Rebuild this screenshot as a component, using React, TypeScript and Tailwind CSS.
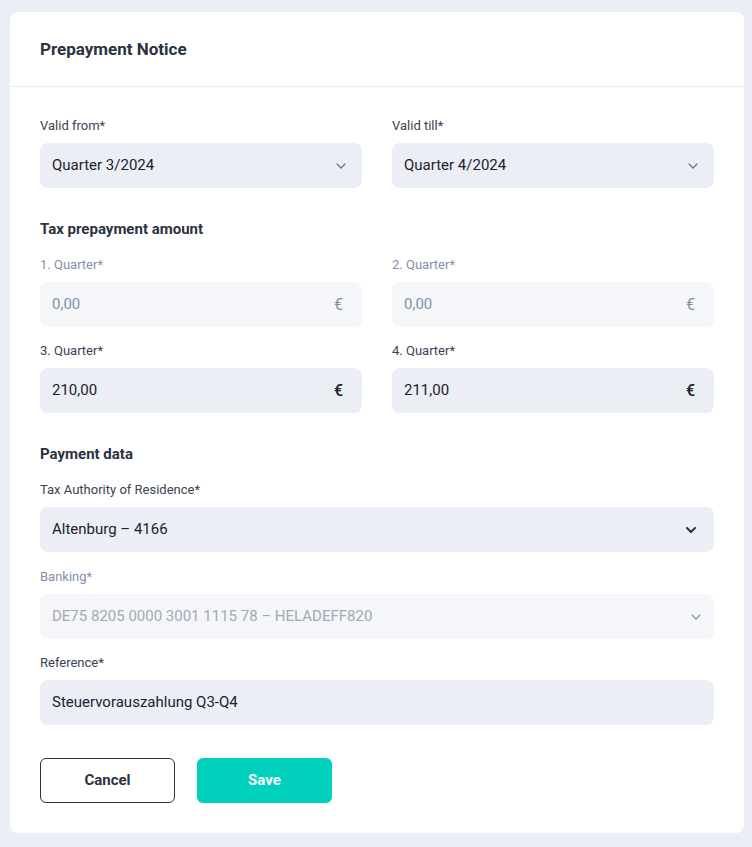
const font = { fontFamily: 'Roboto, "Noto Sans", sans-serif' };

function Chevron({ className }: { className: string }) {
  return (
    <svg width="10" height="6" viewBox="0 0 10 6" fill="none" className={className}>
      <path d="M1 1l4 4 4-4" stroke="currentColor" strokeLinecap="round" strokeLinejoin="round" />
    </svg>
  );
}

function Label({ text, muted }: { text: string; muted?: boolean }) {
  return (
    <div className={`text-[13px] leading-[18px] mb-2 ${muted ? 'text-[#8291a8]' : 'text-[#3a4252]'}`}>{text}</div>
  );
}

function SelectField({ label, value }: { label: string; value: string }) {
  return (
    <div>
      <Label text={label} />
      <div className="h-[45px] rounded-lg bg-[#ebeef5] flex items-center justify-between pl-3 pr-4">
        <span className="text-[15px] text-[#1c2230]">{value}</span>
        <Chevron className="text-[#6b7280] stroke-[1.2]" />
      </div>
    </div>
  );
}

function AmountField({ label, value, disabled }: { label: string; value: string; disabled?: boolean }) {
  return (
    <div>
      <Label text={label} muted={disabled} />
      <div
        className={`h-[45px] rounded-lg flex items-center justify-between pl-3 pr-[19px] ${
          disabled ? 'bg-[#f4f6fa] text-[#8191a8]' : 'bg-[#ebeef5] text-[#1c2230]'
        }`}
      >
        <span className="text-[15px]">{value}</span>
        <span className={`text-base ${disabled ? '' : 'font-medium'}`}>€</span>
      </div>
    </div>
  );
}

export default function App() {
  return (
    <div className="min-h-screen bg-[#ebeef5] pt-3 pb-[14px] pl-[10px] pr-2" style={font}>
      <div className="bg-white rounded-lg">
        <div className="h-[75px] flex items-center px-[30px] pt-[2px] border-b border-[#e9ebf2]">
          <h1 className="text-[17px] font-bold text-[#2b3240]">Prepayment Notice</h1>
        </div>

        <div className="px-[30px] pt-[30px] pb-[30px]">
          <div className="grid grid-cols-2 gap-[30px]">
            <SelectField label="Valid from*" value="Quarter 3/2024" />
            <SelectField label="Valid till*" value="Quarter 4/2024" />
          </div>

          <h2 className="mt-[31px] mb-[17px] text-[15px] leading-5 font-bold text-[#2b3240]">Tax prepayment amount</h2>
          <div className="grid grid-cols-2 gap-x-[30px] gap-y-[15px]">
            <AmountField label="1. Quarter*" value="0,00" disabled />
            <AmountField label="2. Quarter*" value="0,00" disabled />
            <AmountField label="3. Quarter*" value="210,00" />
            <AmountField label="4. Quarter*" value="211,00" />
          </div>

          <h2 className="mt-[31px] mb-[17px] text-[15px] leading-5 font-bold text-[#2b3240]">Payment data</h2>
          <div className="flex flex-col">
            <div>
              <Label text="Tax Authority of Residence*" />
              <div className="h-[45px] rounded-lg bg-[#ebeef5] flex items-center justify-between pl-3 pr-[18px]">
                <span className="text-[15px] text-[#1c2230]">Altenburg – 4166</span>
                <Chevron className="text-[#2b3240] stroke-[2]" />
              </div>
            </div>
            <div className="mt-4">
              <Label text="Banking*" muted />
              <div className="h-[45px] rounded-lg bg-[#f4f6fa] flex items-center justify-between pl-3 pr-[13px]">
                <span className="text-[15px] text-[#a3a9b4]">DE75 8205 0000 3001 1115 78 – HELADEFF820</span>
                <Chevron className="text-[#8191a8] stroke-[1.2]" />
              </div>
            </div>
            <div className="mt-[15px]">
              <Label text="Reference*" />
              <div className="h-[45px] rounded-lg bg-[#ebeef5] flex items-center pl-3">
                <span className="text-[15px] text-[#1c2230]">Steuervorauszahlung Q3-Q4</span>
              </div>
            </div>
          </div>

          <div className="mt-[33px] flex gap-[22px]">
            <button className="w-[135px] h-[45px] rounded-md border border-[#2b3240] text-[15px] font-bold text-[#2b3240]">
              Cancel
            </button>
            <button className="w-[135px] h-[45px] rounded-md bg-[#00d1bc] text-[15px] font-bold text-white">Save</button>
          </div>
        </div>
      </div>
    </div>
  );
}
